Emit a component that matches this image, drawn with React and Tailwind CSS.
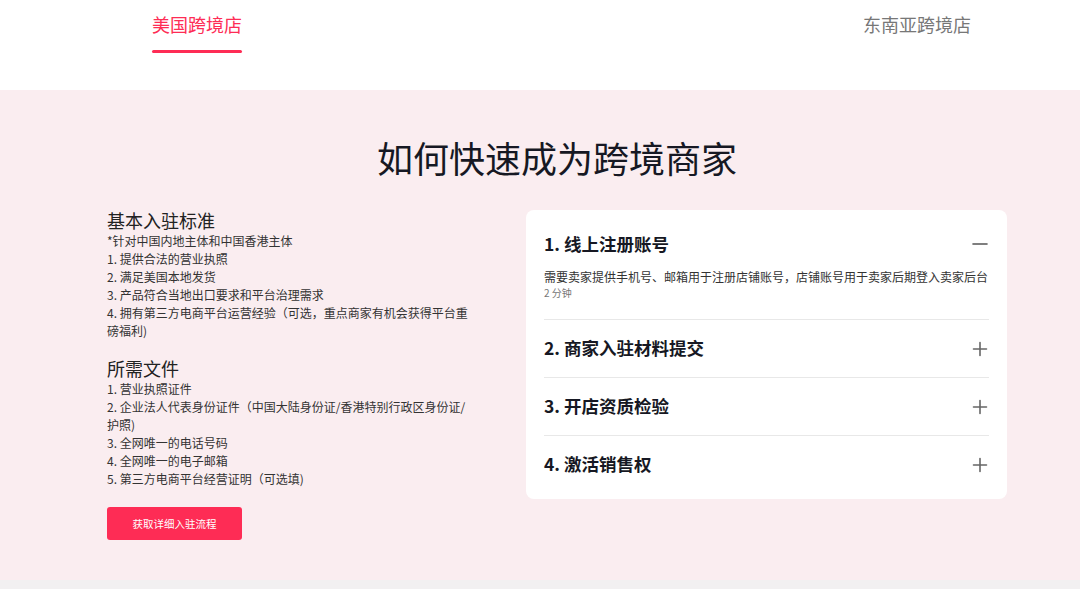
import React, { useState } from "react";

const FONT = { fontFamily: '"Noto Sans CJK SC", "Noto Sans", sans-serif' };

const basics = [
  "1. 提供合法的营业执照",
  "2. 满足美国本地发货",
  "3. 产品符合当地出口要求和平台治理需求",
  "4. 拥有第三方电商平台运营经验（可选，重点商家有机会获得平台重磅福利)",
];

const docs = [
  "1. 营业执照证件",
  "2. 企业法人代表身份证件（中国大陆身份证/香港特别行政区身份证/护照)",
  "3. 全网唯一的电话号码",
  "4. 全网唯一的电子邮箱",
  "5. 第三方电商平台经营证明（可选填)",
];

const steps = [
  {
    title: "1. 线上注册账号",
    desc: "需要卖家提供手机号、邮箱用于注册店铺账号，店铺账号用于卖家后期登入卖家后台",
    time: "2 分钟",
  },
  { title: "2. 商家入驻材料提交" },
  { title: "3. 开店资质检验" },
  { title: "4. 激活销售权" },
];

function Minus() {
  return (
    <svg width="18" height="18" viewBox="0 0 18 18" fill="none">
      <path d="M2 9h14" stroke="#555" strokeWidth="1.6" strokeLinecap="round" />
    </svg>
  );
}

function Plus() {
  return (
    <svg width="18" height="18" viewBox="0 0 18 18" fill="none">
      <path d="M2.5 9h13M9 2.5v13" stroke="#666" strokeWidth="1.6" strokeLinecap="round" />
    </svg>
  );
}

export default function App() {
  const [tab, setTab] = useState(0);
  const [open, setOpen] = useState(0);

  return (
    <div className="w-[1080px] min-h-[589px] bg-[#f2f0f1]" style={FONT}>
      {/* tabs */}
      <div className="h-[90px] bg-white">
        <div className="flex justify-between pl-[152px] pr-[109px] pt-[12px]">
          {["美国跨境店", "东南亚跨境店"].map((t, i) => (
            <button
              key={t}
              onClick={() => setTab(i)}
              className={`flex flex-col items-start text-[18px] leading-[24px] ${
                tab === i ? "text-[#fe2c55]" : "text-[#777]"
              }`}
            >
              <span>{t}</span>
              <span
                className={`mt-[14px] h-[3px] w-full rounded-full ${
                  tab === i ? "bg-[#fe2c55]" : "bg-transparent"
                }`}
              />
            </button>
          ))}
        </div>
      </div>

      {/* main */}
      <div className="bg-[#faedf0] pt-[43px] pb-[40px] pl-[107px]">
        <div className="w-[900px]">
          <h1 className="text-center text-[36px] leading-[48px] text-[#161823]">如何快速成为跨境商家</h1>

          <div className="flex gap-[53px] mt-[27px]">
            <div className="w-[366px] text-[#333]">
              <h2 className="text-[18px] leading-[24px] text-[#222]">基本入驻标准</h2>
              <div className="text-[12px] leading-[18px]">
                <p>*针对中国内地主体和中国香港主体</p>
                {basics.map((b) => (
                  <p key={b}>{b}</p>
                ))}
              </div>

              <h2 className="text-[18px] leading-[24px] text-[#222] mt-[16px]">所需文件</h2>
              <div className="text-[12px] leading-[18px]">
                {docs.map((d) => (
                  <p key={d}>{d}</p>
                ))}
              </div>

              <button className="mt-[19px] w-[135px] h-[33px] rounded-[3px] bg-[#fe2c55] text-white text-[10.5px]">
                获取详细入驻流程
              </button>
            </div>

            <div className="w-[481px] mt-[2px] self-start bg-white rounded-[8px] px-[18px] pb-[6px]">
              {steps.map((s, i) =>
                open === i && s.desc ? (
                  <div key={s.title} className={`pt-[22px] pb-[19px] ${i > 0 ? "border-t border-[#e8e8e8]" : ""}`}>
                    <button onClick={() => setOpen(-1)} className="w-full flex items-center justify-between h-[24px]">
                      <span className="text-[17.5px] font-bold text-[#161823]">{s.title}</span>
                      <Minus />
                    </button>
                    <p className="mt-[12px] text-[12px] leading-[18px] text-[#333] whitespace-nowrap">{s.desc}</p>
                    <p className="text-[10px] leading-[14px] text-[#777]">{s.time}</p>
                  </div>
                ) : (
                  <button
                    key={s.title}
                    onClick={() => setOpen(i)}
                    className={`w-full h-[58px] flex items-center justify-between ${
                      i > 0 ? "border-t border-[#e8e8e8]" : ""
                    }`}
                  >
                    <span className="text-[17.5px] font-bold text-[#161823]">{s.title}</span>
                    <Plus />
                  </button>
                )
              )}
            </div>
          </div>
        </div>
      </div>
    </div>
  );
}
